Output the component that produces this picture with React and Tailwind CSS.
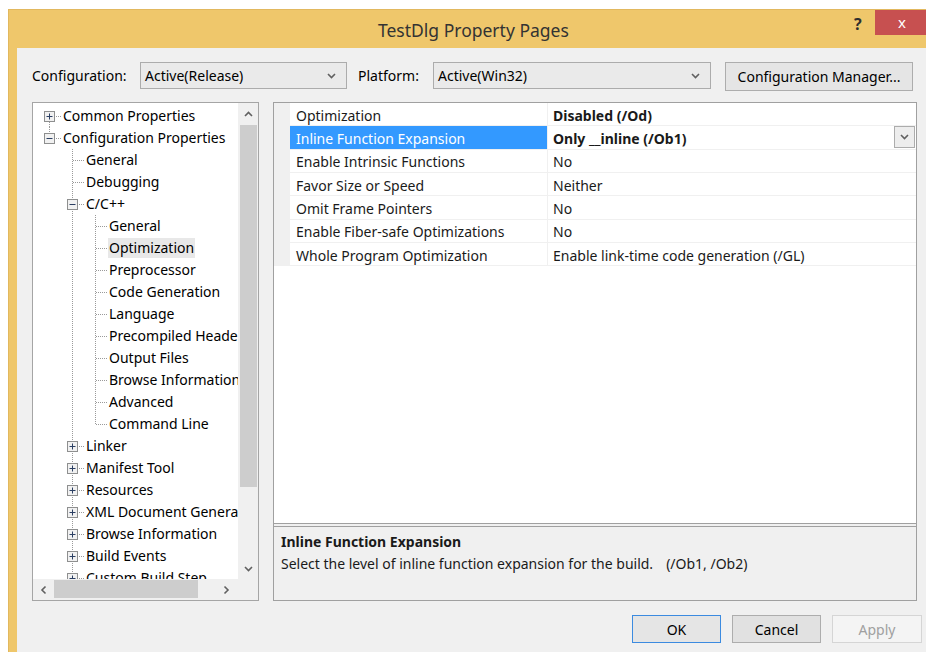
import React from "react";

const FONT = "font-['Noto_Sans','DejaVu_Sans',sans-serif]";

// small "v" arrow used on combo boxes and scroll bars
const Chevron = ({ className = "" }) => (
  <svg width="9" height="6" viewBox="0 0 9 6" className={className}>
    <polyline points="1,1 4.5,4.5 8,1" fill="none" stroke="#606060" strokeWidth="1.6" />
  </svg>
);

// one indent column of the tree: dotted guide lines plus optional +/- box
const Connector = ({ kind, exp }) => (
  <svg width="23" height="22" className="shrink-0">
    {kind !== "none" && (
      <line
        x1="11.5"
        x2="11.5"
        y1={kind === "first" ? 11 : 0}
        y2={kind === "last" ? 11 : 22}
        stroke="#9a9a9a"
        strokeDasharray="1 1"
      />
    )}
    {kind !== "none" && kind !== "pass" && (
      <line x1="12" x2="23" y1="11.5" y2="11.5" stroke="#9a9a9a" strokeDasharray="1 1" />
    )}
    {exp && (
      <g>
        <rect x="6.5" y="6.5" width="10" height="10" fill="#f1f1f1" stroke="#8e8f8f" />
        <line x1="8.5" x2="14.5" y1="11.5" y2="11.5" stroke="#2b3f63" />
        {exp === "plus" && <line x1="11.5" x2="11.5" y1="8.5" y2="14.5" stroke="#2b3f63" />}
      </g>
    )}
  </svg>
);

const cppChildren = [
  "General",
  "Optimization",
  "Preprocessor",
  "Code Generation",
  "Language",
  "Precompiled Headers",
  "Output Files",
  "Browse Information",
  "Advanced",
];

const tree = [
  { label: "Common Properties", cells: [["first", "plus"]] },
  { label: "Configuration Properties", cells: [["last", "minus"]] },
  { label: "General", cells: [["none"], ["mid"]] },
  { label: "Debugging", cells: [["none"], ["mid"]] },
  { label: "C/C++", cells: [["none"], ["mid", "minus"]] },
  ...cppChildren.map((label) => ({
    label,
    cells: [["none"], ["pass"], ["mid"]],
    selected: label === "Optimization",
  })),
  { label: "Command Line", cells: [["none"], ["pass"], ["last"]] },
  ...["Linker", "Manifest Tool", "Resources", "XML Document Generator", "Browse Information", "Build Events", "Custom Build Step"].map(
    (label) => ({ label, cells: [["none"], ["mid", "plus"]] })
  ),
];

const props = [
  { name: "Optimization", value: "Disabled (/Od)", bold: true },
  { name: "Inline Function Expansion", value: "Only __inline (/Ob1)", bold: true, selected: true },
  { name: "Enable Intrinsic Functions", value: "No" },
  { name: "Favor Size or Speed", value: "Neither" },
  { name: "Omit Frame Pointers", value: "No" },
  { name: "Enable Fiber-safe Optimizations", value: "No" },
  { name: "Whole Program Optimization", value: "Enable link-time code generation (/GL)" },
];

const ComboBox = ({ value, width }) => (
  <div className={`${width} h-[27px] border border-[#acacac] bg-[#eaeaea] flex items-center pl-[4px] pr-[10px]`}>
    <span className="flex-1">{value}</span>
    <Chevron />
  </div>
);

const Tree = () => (
  <div className="w-[227px] h-[499px] border border-[#a5a5a5] bg-white flex flex-col">
    <div className="flex flex-1 min-h-0">
      <div className="w-[205px] overflow-hidden pt-[2px] pl-[5px] whitespace-nowrap text-black">
        {tree.map((row, i) => (
          <div key={i} className="h-[22px] flex items-center">
            {row.cells.map(([kind, exp], j) => (
              <Connector key={j} kind={kind} exp={exp} />
            ))}
            <span className={`ml-[1px] px-[1px] leading-[20px] ${row.selected ? "bg-[#e8e8e8]" : ""}`}>{row.label}</span>
          </div>
        ))}
      </div>
      {/* vertical scroll bar */}
      <div className="w-[20px] bg-[#f0f0f0] flex flex-col items-center">
        <div className="h-[22px] flex items-center justify-center">
          <Chevron className="rotate-180" />
        </div>
        <div className="w-[17px] h-[362px] bg-[#cdcdcd]" />
        <div className="flex-1" />
        <div className="h-[21px] flex items-center justify-center">
          <Chevron />
        </div>
      </div>
    </div>
    {/* horizontal scroll bar */}
    <div className="h-[21px] flex bg-[#f0f0f0]">
      <div className="w-[21px] flex items-center justify-center">
        <Chevron className="rotate-90" />
      </div>
      <div className="w-[144px] h-[18px] mt-[1px] bg-[#cdcdcd]" />
      <div className="w-[18px]" />
      <div className="w-[21px] flex items-center justify-center">
        <Chevron className="-rotate-90" />
      </div>
      <div className="flex-1 bg-[#f0f0f0]" />
    </div>
  </div>
);

const PropertyGrid = () => (
  <div className="w-[644px] h-[499px] border border-[#a0a0a0] flex flex-col bg-[#f0f0f0]">
    <div className="h-[421px] bg-white border-b border-[#a0a0a0]">
      {props.map((p) => (
        <div key={p.name} className="h-[23.33px] flex">
          <div className="w-[16px] bg-[#f0f0f0]" />
          <div
            className={`w-[258px] pl-[6px] pt-[2px] flex items-center border-r border-b border-[#f0f0f0] ${
              p.selected ? "bg-[#3399ff] text-white" : "text-[#1a1a1a]"
            }`}
          >
            {p.name}
          </div>
          <div className={`flex-1 pl-[5px] flex items-center border-b border-[#f0f0f0] text-[#1a1a1a] ${p.bold ? "font-bold" : ""}`}>
            <span className="flex-1 pt-[2px]">{p.value}</span>
            {p.selected && (
              <div className="w-[21px] h-[22px] mr-[1px] border border-[#acacac] bg-[#ededed] flex items-center justify-center">
                <Chevron />
              </div>
            )}
          </div>
        </div>
      ))}
    </div>
    <div className="h-[2px]" />
    <div className="flex-1 border-t border-[#a0a0a0] px-[7px] pt-[4px] text-[#1a1a1a] leading-[22px]">
      <div className="font-bold">Inline Function Expansion</div>
      <div>
        Select the level of inline function expansion for the build.<span className="ml-[13px]">(/Ob1, /Ob2)</span>
      </div>
    </div>
  </div>
);

export default function App() {
  return (
    <div className={`w-[926px] h-[652px] overflow-hidden bg-white pl-[8px] pt-[9px] text-[14px] ${FONT}`}>
      <div className="w-[960px] h-[680px] bg-[#efc76b] border-l border-t border-[#e2b85e] flex flex-col">
        {/* caption bar */}
        <div className="h-[38px] flex items-start shrink-0">
          <div className="w-[845px] pl-[369px] pt-[7px] text-[17.5px] text-[#333333]">TestDlg Property Pages</div>
          <div className="w-[21px] pt-[2px] text-[16px] font-bold text-[#2e2e2e]">?</div>
          <div className="w-[60px] h-[25px] bg-[#c75050] text-white text-[15px] flex items-center justify-center pr-[6px]">
            x
          </div>
        </div>
        {/* dialog body */}
        <div className="ml-[8px] flex-1 bg-[#f0f0f0] pl-[15px] pt-[14px] text-black">
          <div className="h-[29px] flex items-start">
            <span className="w-[108px] h-[27px] flex items-center">Configuration:</span>
            <ComboBox value="Active(Release)" width="w-[207px]" />
            <span className="w-[75px] h-[27px] ml-[11px] flex items-center">Platform:</span>
            <ComboBox value="Active(Win32)" width="w-[278px]" />
            <div className="ml-[14px] w-[188px] h-[29px] border border-[#adadad] bg-[#e5e5e5] flex items-center justify-center">
              Configuration Manager...
            </div>
          </div>
          <div className="mt-[11px] flex gap-[14px]">
            <Tree />
            <PropertyGrid />
          </div>
          <div className="mt-[14px] flex gap-[11px] pl-[600px]">
            <div className="w-[89px] h-[28px] border border-[#3c8be0] bg-[#e5e5e5] flex items-center justify-center">OK</div>
            <div className="w-[89px] h-[28px] border border-[#adadad] bg-[#e1e1e1] flex items-center justify-center">Cancel</div>
            <div className="w-[90px] h-[28px] border border-[#d5d5d5] bg-[#f4f4f4] text-[#a0a0a0] flex items-center justify-center">
              Apply
            </div>
          </div>
        </div>
      </div>
    </div>
  );
}
